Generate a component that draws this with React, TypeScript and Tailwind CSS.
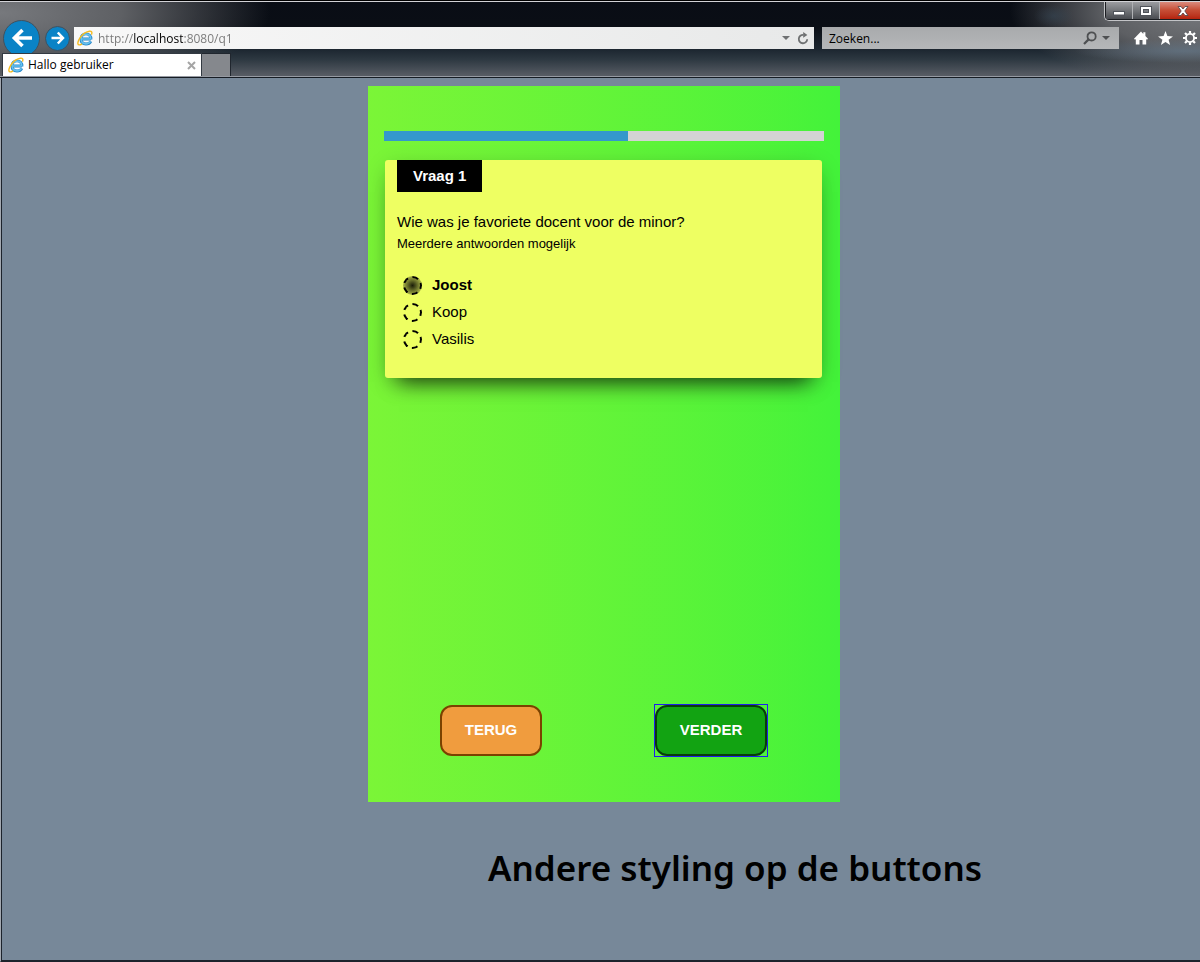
import { useState } from "react";

const teachers = ["Joost", "Koop", "Vasilis"];

function ExplorerLogo() {
  return (
    <svg viewBox="0 0 16 16" className="size-4 shrink-0" fill="none" aria-hidden="true">
      <path d="M13.9 9H4.8M13.9 9.4C14.1 5.6 11.9 3.9 9 3.9C6 3.9 4 6 4 9.1C4 12.2 6 14 9 14C11.2 14 12.9 13.1 13.8 11.3" stroke="#2384c8" strokeWidth="2.9" />
      <path d="M13.6 9H4.8M13.7 9.2C13.7 5.8 11.7 4.1 9 4.1C6.2 4.1 4.2 6.1 4.2 9.1C4.2 12.1 6.2 13.8 9 13.8C10.9 13.8 12.5 13 13.4 11.4" stroke="#66c1ee" strokeWidth="1.7" />
      <path d="M14.4 4.6C15.5 2.2 14.6 .9 12.4 1.2C9 1.7 4.6 5 2.1 9.3C.3 12.5 .5 15 2.4 14.9C3.2 14.9 4.1 14.4 5 13.8" stroke="#f5bb20" strokeWidth="1.4" />
    </svg>
  );
}

function WindowControls() {
  return (
    <div className="flex h-[19px] overflow-hidden rounded-bl-[5px] border-b border-l border-[#c3c4c7] bg-[#1b1d21] pb-px pl-px">
      <button aria-label="Minimaliseren" className="flex w-[27px] items-center justify-center border-r border-[#b0b1b4] bg-linear-to-b from-[#9b9ca0] via-[#77797d] via-45% to-[#4a4c51]">
        <svg viewBox="0 0 12 10" className="h-[10px] w-3"><rect x=".5" y="5.5" width="11" height="3.5" fill="#fff" stroke="#50535a" /></svg>
      </button>
      <button aria-label="Maximaliseren" className="flex w-[27px] items-center justify-center border-r border-[#b0b1b4] bg-linear-to-b from-[#9b9ca0] via-[#77797d] via-45% to-[#4a4c51]">
        <svg viewBox="0 0 12 10" className="h-[10px] w-3">
          <rect x=".5" y=".5" width="11" height="9" fill="#fff" stroke="#50535a" />
          <rect x="3.5" y="3.5" width="5" height="3" fill="#777a80" stroke="#50535a" />
        </svg>
      </button>
      <button aria-label="Sluiten" className="flex w-[40px] items-center justify-center bg-linear-to-b from-[#d98a7c] via-[#c75038] via-45% to-[#b5220c] pl-[6px]">
        <svg viewBox="0 0 12 10" className="h-[10px] w-3">
          <path d="M1 .5H4L6 3L8 .5H11L7.8 5L11 9.5H8L6 7L4 9.5H1L4.2 5Z" fill="#fff" stroke="#5b4a4c" strokeWidth=".9" />
        </svg>
      </button>
    </div>
  );
}

function BrowserHeader() {
  return (
    <header className="border-t border-black bg-[radial-gradient(ellipse_20px_11px_at_1054px_15px,#36475688,transparent),radial-gradient(ellipse_110px_12px_at_1185px_50px,#64788aaa,transparent),radial-gradient(ellipse_190px_75px_at_100%_10px,#77797d,#5d5f63_50%,transparent),radial-gradient(ellipse_270px_80px_at_0px_12px,#77797d,#5e6064_45%,transparent),linear-gradient(to_bottom,#090d15_0px,#0a0e15_26px,#1d2731_49px,#2c3740_58px,#5b5f67_76px)] font-['Open_Sans',sans-serif] text-[12px]">
      <div className="flex h-[25px] items-start justify-end border-t border-[#d2d2d6]">
        <WindowControls />
      </div>
      <div className="flex h-6 items-center pl-[3px]">
        <button aria-label="Vorige" className="-my-[7px] mr-[5px] flex size-[37px] shrink-0 items-center justify-center rounded-full border border-[#42515d] bg-[#0a83c6]">
          <svg viewBox="0 0 22 20" className="h-5 w-[22px]" fill="none" stroke="#fff" strokeWidth="3.6"><path d="M11.5 2L3.4 10L11.5 18M3.4 10H21" /></svg>
        </button>
        <button aria-label="Volgende" className="mr-1 flex size-[25px] shrink-0 items-center justify-center rounded-full border border-[#42515d] bg-[#0a83c6]">
          <svg viewBox="0 0 14 14" className="size-[14px]" fill="none" stroke="#fff" strokeWidth="2.5"><path d="M6.8 1.5L12 7L6.8 12.5M12 7H.5" /></svg>
        </button>
        <div className="flex h-[22px] min-w-0 flex-1 items-center bg-linear-to-r from-[#f8f8f8] to-[#e8e9e9] pl-[3px] pr-[5px]">
          <ExplorerLogo />
          <input
            aria-label="Adres"
            defaultValue="http://localhost:8080/q1"
            className="ml-[5px] h-[22px] min-w-0 flex-1 bg-[linear-gradient(to_right,#777_0px,#777_35px,#000_35px,#000_85px,#777_85px)] bg-clip-text text-transparent outline-none"
          />
          <button aria-label="Adressen tonen" className="mr-[7px]">
            <svg viewBox="0 0 8 4" className="h-1 w-2"><path d="M0 0H8L4 4Z" fill="#6f7172" /></svg>
          </button>
          <button aria-label="Vernieuwen">
            <svg viewBox="0 0 12 13" className="h-[13px] w-3" fill="none"><path d="M6.5 2.9A4.2 4.2 0 1 0 10.2 7.2" stroke="#6f7172" strokeWidth="1.8" /><path d="M6.2 0L10.4 2.9L6.2 5.8Z" fill="#6f7172" /></svg>
          </button>
        </div>
        <div className="ml-2 flex h-[22px] w-[297px] items-center bg-linear-to-b from-[#a8aaac] to-[#b5b7b9] pl-[7px] pr-[9px]">
          <input aria-label="Zoeken" placeholder="Zoeken..." className="h-[22px] min-w-0 flex-1 text-black outline-none placeholder:text-black placeholder:opacity-100" />
          <button aria-label="Zoek" className="mr-[5px]">
            <svg viewBox="0 0 14 14" className="size-[14px]" fill="none" stroke="#4e5052"><circle cx="8.6" cy="5.4" r="4.1" strokeWidth="1.8" /><path d="M5.6 8.4L1 13" strokeWidth="2.2" /></svg>
          </button>
          <button aria-label="Zoekopties">
            <svg viewBox="0 0 8 4" className="h-1 w-2"><path d="M0 0H8L4 4Z" fill="#4e5052" /></svg>
          </button>
        </div>
        <div className="flex items-center gap-[10px] pl-[15px] pr-[3px]">
          <button aria-label="Startpagina">
            <svg viewBox="0 0 14 14" className="size-[14px]" fill="#fff"><path d="M7 .5L9.3 2.9V1.2H11.4V5L14 7.7L13 8.8L12.2 8V13.5H8.5V9H5.5V13.5H1.8V8L1 8.8L0 7.7Z" /></svg>
          </button>
          <button aria-label="Favorieten">
            <svg viewBox="0 0 15 14" className="h-[14px] w-[15px]" fill="#fff"><path d="M7.5 0L9.4 5.1L15 5.4L10.6 8.8L12.1 14L7.5 11L2.9 14L4.4 8.8L0 5.4L5.6 5.1Z" /></svg>
          </button>
          <button aria-label="Extra">
            <svg viewBox="-7 -7 14 14" className="size-[14px]" fill="none" stroke="#fff">
              <circle r="4.1" strokeWidth="1.9" />
              <path d="M0 -4.5V-7M0 4.5V7M-4.5 0H-7M4.5 0H7M3.2 3.2L5 5M-3.2 3.2L-5 5M3.2 -3.2L5 -5M-3.2 -3.2L-5 -5" strokeWidth="2.2" />
            </svg>
          </button>
        </div>
      </div>
      <div className="relative mt-[3px] flex h-[23px] items-stretch pl-[2px]">
        <div className="flex w-[200px] items-center border-x border-t border-[#333a42] bg-white px-[5px]">
          <ExplorerLogo />
          <span className="ml-1 flex-1 text-black">Hallo gebruiker</span>
          <button aria-label="Tabblad sluiten">
            <svg viewBox="0 0 9 9" className="size-[9px]" stroke="#a5a5a5" strokeWidth="2"><path d="M1 1L8 8M8 1L1 8" /></svg>
          </button>
        </div>
        <button aria-label="Nieuw tabblad" className="w-[29px] border-r border-t border-[#20262e] bg-[#85888d]" />
      </div>
      <div className="h-px bg-[#969aa2]" />
      <div className="h-px bg-[#161c24]" />
    </header>
  );
}

export default function App() {
  const [answer, setAnswer] = useState("Joost");

  return (
    <div className="flex min-h-screen flex-col bg-[#778899]">
      <BrowserHeader />
      <main className="flex flex-1 flex-col border-b border-l border-b-[#1c232c] border-l-[#a3a9b1]">
        <div className="flex-1 border-b border-l border-[#1c232c] pb-[60px] pl-[6px] pt-2">
          <form
            onSubmit={(event) => event.preventDefault()}
            className="mx-auto flex min-h-[716px] max-w-[472px] flex-col bg-linear-to-r from-[#7bf537] to-[#43f33a] pb-[46px] pt-[45px] font-['Liberation_Sans',sans-serif] text-[15px] text-black"
          >
            <div role="progressbar" aria-label="Voortgang" aria-valuenow={55} className="mx-4 h-[10px] bg-[#d3d3d3]">
              <div className="h-full w-[244px] bg-[#3498cc]" />
            </div>
            <section className="ml-[17px] mr-[18px] mt-[19px] rounded-[3px] bg-[#eeff62] px-3 pb-[25px] shadow-[0_18px_20px_-14px_rgba(0,0,0,0.65),0_6px_22px_-4px_rgba(0,0,0,0.3)]">
              <h2 className="inline-block h-8 bg-black px-4 align-top font-bold leading-8 text-white">Vraag 1</h2>
              <fieldset>
                <legend className="pt-[19px] leading-[22px]">
                  Wie was je favoriete docent voor de minor?
                  <small className="block text-[13px] leading-[22px]">Meerdere antwoorden mogelijk</small>
                </legend>
                <div className="pl-[6px] pt-[17px]">
                  {teachers.map((name) => (
                    <label key={name} className="flex h-[27px] items-center gap-[10px] has-checked:font-bold">
                      <input
                        type="radio"
                        name="docent"
                        value={name}
                        checked={answer === name}
                        onChange={() => setAnswer(name)}
                        className="size-[19px] appearance-none rounded-full border-2 border-dashed border-black bg-origin-border checked:bg-[radial-gradient(circle,#1a1c08_0%,#b4c04c_75%)]"
                      />
                      {name}
                    </label>
                  ))}
                </div>
              </fieldset>
            </section>
            <div className="mt-auto grid grid-cols-2 justify-items-center pl-[13px] pr-[19px]">
              <button type="button" className="h-[51px] rounded-xl border-2 border-[#7a4200] bg-[#f09c3e] px-[23px] font-bold text-white">TERUG</button>
              <div className="outline outline-[#1d1df0]">
                <button type="submit" className="block h-[51px] rounded-xl border-2 border-[#073f0a] bg-[#12a312] px-[23px] font-bold text-white">VERDER</button>
              </div>
            </div>
          </form>
          <h1 className="mt-11 pl-[262px] text-center font-['Noto_Sans',sans-serif] text-[35px] font-semibold leading-[44px] text-black">
            Andere styling op de buttons
          </h1>
        </div>
      </main>
    </div>
  );
}
